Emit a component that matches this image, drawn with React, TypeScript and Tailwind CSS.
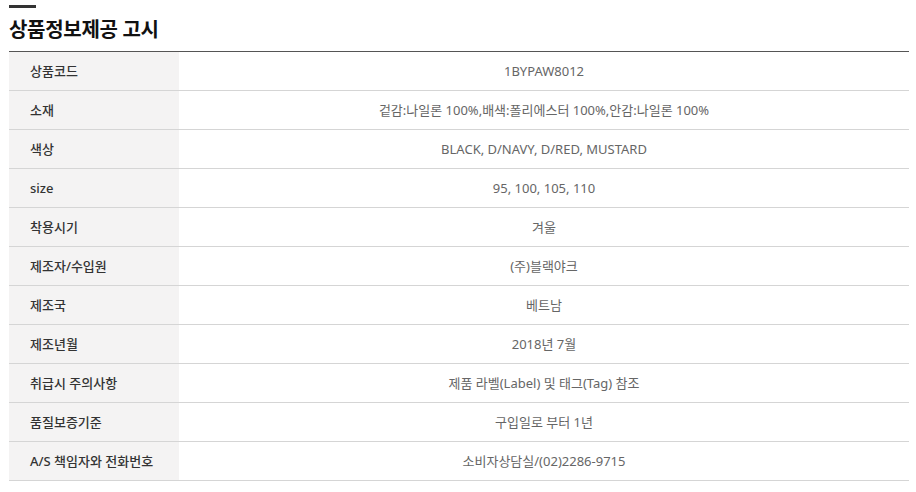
import React from "react";

const rows: [string, string][] = [
  ["상품코드", "1BYPAW8012"],
  ["소재", "겉감:나일론 100%,배색:폴리에스터 100%,안감:나일론 100%"],
  ["색상", "BLACK, D/NAVY, D/RED, MUSTARD"],
  ["size", "95, 100, 105, 110"],
  ["착용시기", "겨울"],
  ["제조자/수입원", "(주)블랙야크"],
  ["제조국", "베트남"],
  ["제조년월", "2018년 7월"],
  ["취급시 주의사항", "제품 라벨(Label) 및 태그(Tag) 참조"],
  ["품질보증기준", "구입일로 부터 1년"],
  ["A/S 책임자와 전화번호", "소비자상담실/(02)2286-9715"],
];

export default function App() {
  return (
    <div
      className="w-[916px] h-[492px] bg-white pl-[9px] overflow-hidden"
      style={{ fontFamily: '"Noto Sans", "Noto Sans CJK KR", sans-serif' }}
    >
      <div className="pt-[5px]">
        <div className="w-[27px] h-[3px] bg-[#333]" />
      </div>
      <div className="h-[43px] flex items-center pt-[1px]">
        <h2 className="text-[20px] font-bold leading-none text-[#111] tracking-[-0.3px]">
          상품정보제공 고시
        </h2>
      </div>
      <div className="w-[900px] border-t border-[#555]">
        {rows.map(([k, v]) => (
          <div key={k} className="flex h-[39px] border-b border-[#d5d5d5]">
            <div className="w-[170px] bg-[#f4f3f3] pl-[21px] pt-[1px] flex items-center text-[13px] font-medium text-[#333]">
              {k}
            </div>
            <div className="flex-1 flex items-center justify-center pt-[1px] text-[13px] text-[#666]">
              {v}
            </div>
          </div>
        ))}
      </div>
    </div>
  );
}
